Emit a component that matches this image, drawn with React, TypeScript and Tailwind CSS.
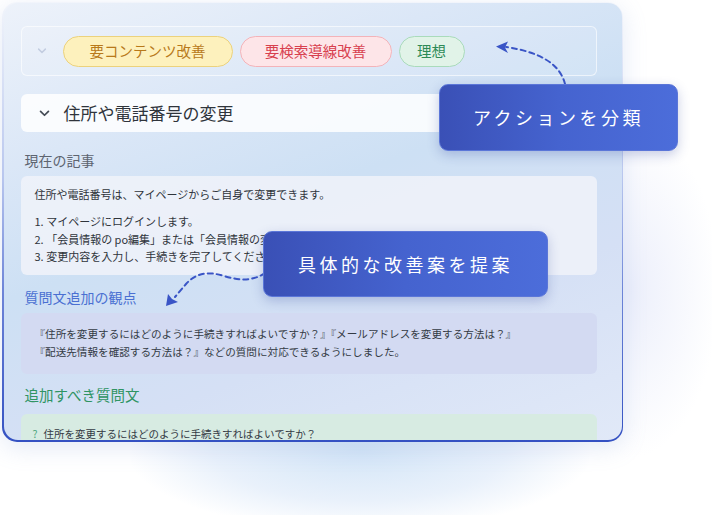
import React from "react";

const Chevron = ({ className }: { className?: string }) => (
  <svg viewBox="0 0 12 8" className={className} fill="none">
    <path d="M1.5 1.5 L6 6 L10.5 1.5" stroke="currentColor" strokeWidth="2" strokeLinecap="round" strokeLinejoin="round" />
  </svg>
);

export default function App() {
  return (
    <div
      className="relative w-[712px] h-[515px] overflow-hidden bg-white pl-[2px] pt-[2px]"
      style={{ fontFamily: '"Noto Sans CJK JP", "Noto Sans", sans-serif' }}
    >
      {/* background glows */}
      <div className="absolute left-[130px] top-[370px] w-[460px] h-[160px] rounded-full bg-[radial-gradient(ellipse_at_center,#d3e5f7_0%,#e9f1fb_45%,rgba(255,255,255,0)_72%)]" />
      <div className="absolute left-[540px] top-[120px] w-[180px] h-[340px] rounded-full bg-[radial-gradient(ellipse_at_center,#eceffb_0%,rgba(255,255,255,0)_70%)]" />

      {/* card with gradient border */}
      <div className="relative w-[621px] h-[440px] rounded-[15px] bg-[linear-gradient(180deg,#f2f5fb_0%,#b8c6ee_40%,#6f86d8_65%,#3451c2_100%)] px-[1.5px] pt-px pb-[2px] shadow-[0_6px_24px_rgba(120,150,210,0.2)]">
        <div className="h-full w-full overflow-hidden rounded-[14px] bg-[linear-gradient(160deg,#edf2fa_0%,#dbe7f7_25%,#cde0f4_45%,#d5e0f5_70%,#e1e9f8_100%)] pl-[17px] pr-[25px] pt-[23px]">
          {/* tag row */}
          <div className="flex h-[50px] items-center gap-[7px] rounded-[6px] border border-white/60 bg-white/10 pl-[15px]">
            <Chevron className="mr-[9px] h-[6px] w-[10px] text-[#c3cde0]" />
            <span className="flex h-[31px] w-[170px] items-center justify-center rounded-full border-[1.5px] border-[#ecd27c] bg-[#fdf1bd] text-[14.5px] text-[#b8791a]">
              要コンテンツ改善
            </span>
            <span className="flex h-[31px] w-[152px] items-center justify-center rounded-full border-[1.5px] border-[#f3b3b9] bg-[#fde5e8] text-[14.5px] text-[#d8404e]">
              要検索導線改善
            </span>
            <span className="flex h-[31px] w-[66px] items-center justify-center rounded-full border-[1.5px] border-[#a9dbbb] bg-[#e1f3e8] text-[14.5px] text-[#2d8a56]">
              理想
            </span>
          </div>

          {/* accordion header */}
          <div className="mt-[18px] flex h-[38px] items-center rounded-[6px] bg-white/85 pl-[18px]">
            <Chevron className="mr-[14px] h-[7px] w-[11px] text-[#444b55]" />
            <span className="text-[17px] text-[#2f343b]">住所や電話番号の変更</span>
          </div>

          <div className="mt-[18px] pl-[4px] text-[14px] leading-[20px] text-[#5d6470]">現在の記事</div>
          <div className="mt-[6px] rounded-[6px] bg-[#eef2f9]/90 px-[14px] pt-[9px] pb-[9px] text-[11px] text-[#2f343b]">
            <div className="leading-[18px]">住所や電話番号は、マイページからご自身で変更できます。</div>
            <div className="mt-[10px] leading-[17.5px]">1. マイページにログインします。</div>
            <div className="leading-[17.5px]">2. 「会員情報の po編集」または「会員情報の変更」を選択します。</div>
            <div className="leading-[17.5px]">3. 変更内容を入力し、手続きを完了してください。</div>
          </div>

          <div className="mt-[12px] pl-[4px] text-[14px] leading-[20px] text-[#4a70d2]">質問文追加の観点</div>
          <div className="mt-[6px] rounded-[6px] bg-[#d3daf2] px-[14px] pt-[12px] pb-[13px] text-[10.6px] leading-[18px] text-[#343a44]">
            <div>『住所を変更するにはどのように手続きすればよいですか？』『メールアドレスを変更する方法は？』</div>
            <div>『配送先情報を確認する方法は？』などの質問に対応できるようにしました。</div>
          </div>

          <div className="mt-[11px] pl-[4px] text-[14.5px] leading-[20px] text-[#2f9463]">追加すべき質問文</div>
          <div className="mt-[9px] h-[60px] rounded-[6px] bg-[#d7ebe2] px-[12px] pt-[11px] text-[10.5px] leading-[18px] text-[#343a44]">
            <span className="mr-[6px] text-[#4aa57a]">?</span>住所を変更するにはどのように手続きすればよいですか？
          </div>
        </div>
      </div>

      {/* dashed arrows */}
      <svg className="absolute left-0 top-0" width="712" height="515" viewBox="0 0 712 515" fill="none">
        <path d="M565 84 C560 64 540 52 506 47" stroke="#3a55c6" strokeWidth="2" strokeDasharray="5 4" strokeLinecap="round" />
        <path d="M496 46.5 L508 41.5 L505 47.5 L508 53 Z" fill="#3a55c6" />
        <path d="M265 273 C252 282 238 280 224 276 C208 271 196 273 186 284 L175 297" stroke="#3a55c6" strokeWidth="2" strokeDasharray="5 4" strokeLinecap="round" />
        <path d="M166 306 L168 294 L172 299 L178 302 Z" fill="#3a55c6" />
      </svg>

      {/* callouts */}
      <div className="absolute left-[439px] top-[84px] flex h-[67px] w-[239px] items-center justify-center rounded-[9px] border border-[#5b76d8] bg-[linear-gradient(90deg,#3a50b6_0%,#4563cf_50%,#4c6dda_100%)] text-[18px] tracking-[3.5px] text-white shadow-[0_4px_12px_rgba(40,60,150,0.25)]">
        アクションを分類
      </div>
      <div className="absolute left-[263px] top-[231px] flex h-[66px] w-[285px] items-center justify-center rounded-[9px] border border-[#5b76d8] bg-[linear-gradient(90deg,#3a50b6_0%,#4563cf_50%,#4c6dda_100%)] text-[18px] tracking-[3.5px] text-white shadow-[0_4px_12px_rgba(40,60,150,0.25)]">
        具体的な改善案を提案
      </div>
    </div>
  );
}
